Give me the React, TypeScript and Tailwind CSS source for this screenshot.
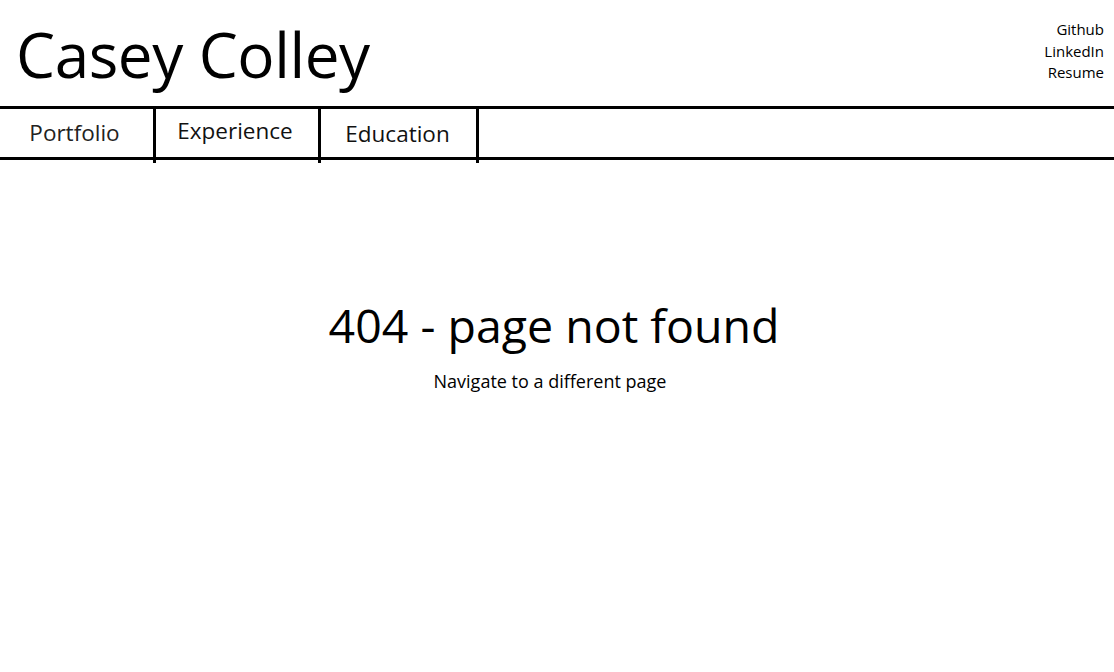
import React from "react";

const font = { fontFamily: '"Open Sans", "Noto Sans", sans-serif' };

export default function App() {
  return (
    <div className="min-h-screen w-full bg-white text-black" style={font}>
      <header className="flex h-[106px] items-start justify-between">
        <h1 className="pl-[16px] pt-[14px] text-[62px] leading-[80px] font-normal tracking-[-0.4px]">
          Casey Colley
        </h1>
        <div className="flex flex-col items-end pr-[10px] pt-[19px] text-[15px] leading-[21.5px]">
          <a>Github</a>
          <a>LinkedIn</a>
          <a>Resume</a>
        </div>
      </header>
      <nav className="flex h-[54px] items-start border-y-[3px] border-black">
        <div className="flex h-[54px] w-[156px] shrink-0 items-start justify-center border-r-[3px] border-black pr-[4px] pt-[10px] text-[22.5px] leading-[28px] text-[#222]">
          Portfolio
        </div>
        <div className="flex h-[54px] w-[165px] shrink-0 items-start justify-center border-r-[3px] border-black pr-[4px] pt-[8px] text-[22.5px] leading-[28px] text-[#111]">
          Experience
        </div>
        <div className="flex h-[54px] w-[158px] shrink-0 items-start justify-center border-r-[3px] border-black pr-[2px] pt-[11px] text-[22.5px] leading-[28px] text-[#111]">
          Education
        </div>
      </nav>
      <main className="flex flex-col items-center pr-[6px] pt-[135px]">
        <h2 className="text-[46.5px] leading-[60px] font-normal">404 - page not found</h2>
        <p className="pt-[14px] text-[18px] leading-[24px] pr-[8px]">Navigate to a different page</p>
      </main>
    </div>
  );
}
